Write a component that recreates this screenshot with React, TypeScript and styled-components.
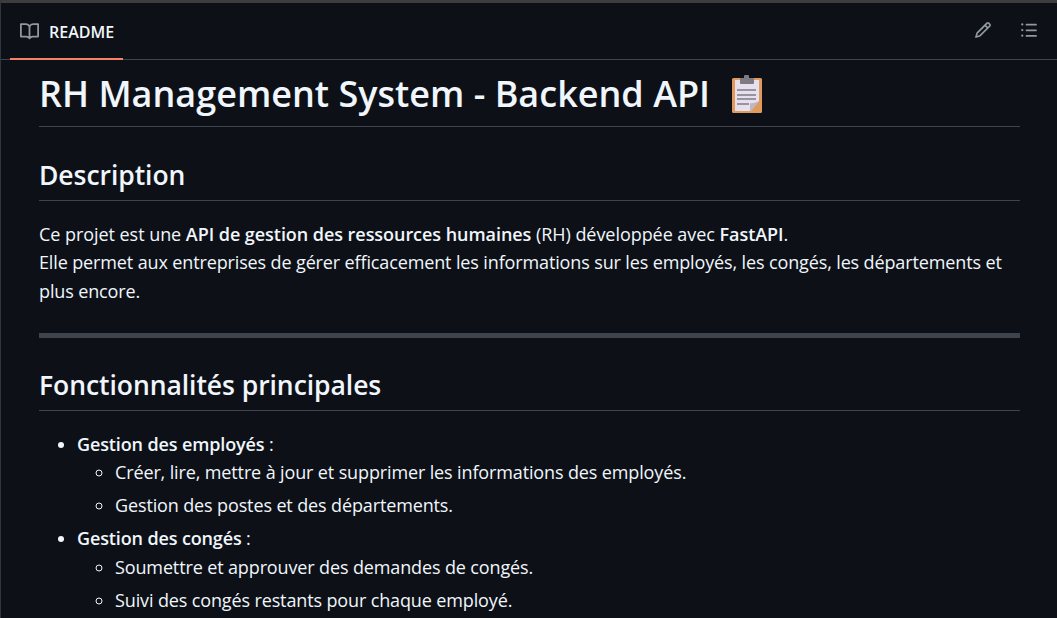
import * as React from 'react';
import styled, { createGlobalStyle } from 'styled-components';

const GlobalStyle = createGlobalStyle`
  html, body {
    margin: 0;
    height: 100%;
    overflow: hidden;
    background: #0d1117;
  }
`;

const Box = styled.div`
  height: 618px;
  overflow: hidden;
  box-sizing: border-box;
  border-top: 3px solid #3d3d3d;
  border-left: 1px solid #30363d;
  background: #0d1117;
  color: #f0f6fc;
  font-family: "Open Sans", "Noto Sans", sans-serif;
`;

const Header = styled.header`
  display: flex;
  align-items: stretch;
  justify-content: space-between;
  height: 57px;
  padding: 0 19px 0 9px;
  box-sizing: border-box;
  border-bottom: 1px solid #3d444d;
`;

const Tab = styled.div`
  display: flex;
  align-items: center;
  gap: 10px;
  width: 113px;
  height: 57px;
  box-sizing: border-box;
  padding: 2px 0 0 10px;
  border-bottom: 2px solid #f78166;
  font-size: 16px;
  font-weight: 600;
`;

const TabIcon = styled.svg`
  color: #9198a1;
`;

const Actions = styled.div`
  display: flex;
  align-items: center;
  gap: 28px;
  padding-bottom: 2px;
  color: #9198a1;
`;

const Article = styled.article`
  padding: 5px 37px 0 38px;
`;

const Title = styled.h1`
  display: flex;
  align-items: center;
  gap: 21px;
  box-sizing: border-box;
  margin: 0 0 24px;
  height: 62px;
  padding-bottom: 4px;
  border-bottom: 1px solid #3d444d;
  font-size: 36px;
  font-weight: 600;
  line-height: 56px;
`;

const Heading = styled.h2`
  margin: 0 0 19px;
  height: 49px;
  border-bottom: 1px solid #3d444d;
  font-size: 26.5px;
  font-weight: 600;
  letter-spacing: -0.06px;
  line-height: 49px;
`;

const Paragraph = styled.p`
  margin: 0;
  font-size: 18px;
  line-height: 28.3px;
  letter-spacing: -0.13px;

  &::first-line {
    letter-spacing: -0.05px;
  }

  strong {
    font-weight: 600;
  }
`;

const Rule = styled.hr`
  height: 5px;
  margin: 28px 0 23px;
  border: 0;
  background: #3d444d;
`;

const List = styled.ul`
  margin: 0;
  padding-left: 38px;
  list-style: disc;
  font-size: 18px;
  line-height: 28.5px;
  letter-spacing: -0.13px;

  strong {
    font-weight: 600;
  }
`;

const SubList = styled.ul`
  margin: 0;
  padding-left: 38px;
  list-style: circle;
`;

const Item = styled.li`
  margin-top: 4.5px;
`;

const ClipboardIcon = () => (
  <svg width="32" height="38" viewBox="0 0 32 38">
    <rect x="1" y="3" width="30" height="35" rx="1.5" fill="#e09a5d" />
    <rect x="4" y="5" width="24" height="31" fill="#e6e0ee" />
    <path d="M28 26 L20 36 L19 36 L19 28 Q22 29 28 26 Z" fill="#bdb6c6" />
    <path d="M28 26 L20 36 L28 36 Z" fill="#e09a5d" />
    <rect x="6" y="14" width="19" height="2" fill="#98939f" />
    <rect x="6" y="19" width="19" height="2" fill="#98939f" />
    <rect x="6" y="23" width="19" height="2" fill="#98939f" />
    <rect x="6" y="28" width="12" height="2" fill="#98939f" />
    <rect x="9" y="3" width="14" height="6" rx="1" fill="#7d7a80" />
    <rect x="13" y="0" width="5" height="5" rx="1" fill="#7d7a80" />
  </svg>
);

const BookIcon = () => (
  <TabIcon width="19" height="19" viewBox="0 0 16 16" fill="currentColor">
    <path d="M0 1.75A.75.75 0 0 1 .75 1h4.253c1.227 0 2.317.59 3 1.501A3.743 3.743 0 0 1 11.006 1h4.245a.75.75 0 0 1 .75.75v10.5a.75.75 0 0 1-.75.75h-4.507a2.25 2.25 0 0 0-1.591.659l-.622.621a.75.75 0 0 1-1.06 0l-.622-.621A2.25 2.25 0 0 0 5.258 13H.75a.75.75 0 0 1-.75-.75Zm7.251 10.324.004-5.073-.002-2.253A2.25 2.25 0 0 0 5.003 2.5H1.5v9h3.757a3.75 3.75 0 0 1 1.994.574ZM8.755 4.75l-.004 7.322a3.752 3.752 0 0 1 1.992-.572H14.5v-9h-3.495a2.25 2.25 0 0 0-2.25 2.25Z" />
  </TabIcon>
);

const PencilIcon = () => (
  <svg width="18" height="18" viewBox="0 0 16 16" fill="currentColor">
    <path d="M11.013 1.427a1.75 1.75 0 0 1 2.474 0l1.086 1.086a1.75 1.75 0 0 1 0 2.474l-8.61 8.61c-.21.21-.47.364-.756.445l-3.251.93a.75.75 0 0 1-.927-.928l.929-3.25c.081-.286.235-.547.445-.758l8.61-8.61Zm.176 4.823L9.75 4.81l-6.286 6.287a.253.253 0 0 0-.064.108l-.558 1.953 1.953-.558a.253.253 0 0 0 .108-.064Zm1.238-3.763a.25.25 0 0 0-.354 0L10.811 3.75l1.439 1.44 1.263-1.263a.25.25 0 0 0 0-.354Z" />
  </svg>
);

const OutlineIcon = () => (
  <svg width="18" height="18" viewBox="0 0 16 16" fill="currentColor">
    <path d="M5.75 2.5h8.5a.75.75 0 0 1 0 1.5h-8.5a.75.75 0 0 1 0-1.5Zm0 5h8.5a.75.75 0 0 1 0 1.5h-8.5a.75.75 0 0 1 0-1.5Zm0 5h8.5a.75.75 0 0 1 0 1.5h-8.5a.75.75 0 0 1 0-1.5ZM2 14a1 1 0 1 1 0-2 1 1 0 0 1 0 2Zm1-6a1 1 0 1 1-2 0 1 1 0 0 1 2 0ZM2 4a1 1 0 1 1 0-2 1 1 0 0 1 0 2Z" />
  </svg>
);

const App: React.FC = () => (
  <>
    <GlobalStyle />
    <Box>
      <Header>
        <Tab>
          <BookIcon />
          README
        </Tab>
        <Actions>
          <PencilIcon />
          <OutlineIcon />
        </Actions>
      </Header>
      <Article>
        <Title>
          RH Management System - Backend API
          <ClipboardIcon />
        </Title>
        <Heading>Description</Heading>
        <Paragraph>
          Ce projet est une <strong>API de gestion des ressources humaines</strong> (RH) développée avec{' '}
          <strong>FastAPI</strong>.
          <br />
          Elle permet aux entreprises de gérer efficacement les informations sur les employés, les congés, les
          départements et plus encore.
        </Paragraph>
        <Rule />
        <Heading>Fonctionnalités principales</Heading>
        <List>
          <li>
            <strong>Gestion des employés</strong> :
            <SubList>
              <li>Créer, lire, mettre à jour et supprimer les informations des employés.</li>
              <Item>Gestion des postes et des départements.</Item>
            </SubList>
          </li>
          <Item>
            <strong>Gestion des congés</strong> :
            <SubList>
              <li>Soumettre et approuver des demandes de congés.</li>
              <Item>Suivi des congés restants pour chaque employé.</Item>
            </SubList>
          </Item>
        </List>
      </Article>
    </Box>
  </>
);

export default App;
